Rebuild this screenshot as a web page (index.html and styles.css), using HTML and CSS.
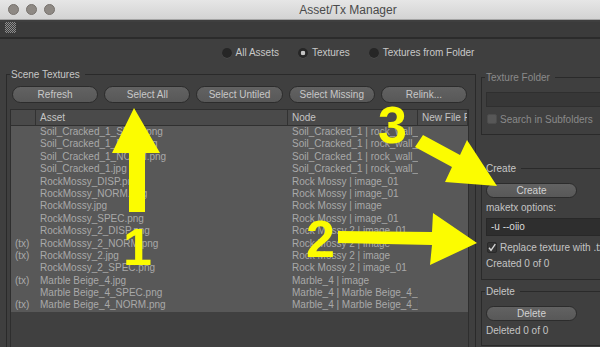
FILE: index.html
```html
<!DOCTYPE html>
<html>
<head>
<meta charset="utf-8">
<link rel="stylesheet" href="styles.css">
</head>
<body>
<div class="window">
  <header class="titlebar">
    <div class="lights"><span class="light"></span><span class="light"></span><span class="light"></span></div>
    <div class="title">Asset/Tx Manager</div>
  </header>
  <div class="toolbar"><span class="grip"></span></div>
  <div class="modes">
    <span class="radio"><span class="dot"></span>All Assets</span>
    <span class="radio on"><span class="dot"></span>Textures</span>
    <span class="radio"><span class="dot"></span>Textures from Folder</span>
  </div>
  <div class="panes">
    <section class="group scene">
      <div class="group-title"><span>Scene Textures</span></div>
      <div class="btnrow">
        <button class="btn">Refresh</button>
        <button class="btn">Select All</button>
        <button class="btn">Select Untiled</button>
        <button class="btn">Select Missing</button>
        <button class="btn">Relink...</button>
      </div>
      <div class="table">
        <div class="thead"><div class="th"></div><div class="th">Asset</div><div class="th">Node</div><div class="th">New File Path</div></div>
        <div class="tbody">
          <div class="tr"><div class="td"></div><div class="td">Soil_Cracked_1_SPEC.png</div><div class="td">Soil_Cracked_1 | rock_wall_1_</div><div class="td"></div></div>
          <div class="tr"><div class="td"></div><div class="td">Soil_Cracked_1_DISP.png</div><div class="td">Soil_Cracked_1 | rock_wall_1_</div><div class="td"></div></div>
          <div class="tr"><div class="td"></div><div class="td">Soil_Cracked_1_NORM.png</div><div class="td">Soil_Cracked_1 | rock_wall_1_</div><div class="td"></div></div>
          <div class="tr"><div class="td"></div><div class="td">Soil_Cracked_1.jpg</div><div class="td">Soil_Cracked_1 | rock_wall_1</div><div class="td"></div></div>
          <div class="tr"><div class="td"></div><div class="td">RockMossy_DISP.png</div><div class="td">Rock Mossy | image_01</div><div class="td"></div></div>
          <div class="tr"><div class="td"></div><div class="td">RockMossy_NORM.png</div><div class="td">Rock Mossy | image_01</div><div class="td"></div></div>
          <div class="tr"><div class="td"></div><div class="td">RockMossy.jpg</div><div class="td">Rock Mossy | image</div><div class="td"></div></div>
          <div class="tr"><div class="td"></div><div class="td">RockMossy_SPEC.png</div><div class="td">Rock Mossy | image_01</div><div class="td"></div></div>
          <div class="tr"><div class="td"></div><div class="td">RockMossy_2_DISP.png</div><div class="td">Rock Mossy 2 | image_01</div><div class="td"></div></div>
          <div class="tr"><div class="td">(tx)</div><div class="td">RockMossy_2_NORM.png</div><div class="td">Rock Mossy 2 | image</div><div class="td"></div></div>
          <div class="tr"><div class="td">(tx)</div><div class="td">RockMossy_2.jpg</div><div class="td">Rock Mossy 2 | image</div><div class="td"></div></div>
          <div class="tr"><div class="td"></div><div class="td">RockMossy_2_SPEC.png</div><div class="td">Rock Mossy 2 | image_01</div><div class="td"></div></div>
          <div class="tr"><div class="td">(tx)</div><div class="td">Marble Beige_4.jpg</div><div class="td">Marble_4 | image</div><div class="td"></div></div>
          <div class="tr"><div class="td"></div><div class="td">Marble Beige_4_SPEC.png</div><div class="td">Marble_4 | Marble Beige_4_SPEC</div><div class="td"></div></div>
          <div class="tr"><div class="td">(tx)</div><div class="td">Marble Beige_4_NORM.png</div><div class="td">Marble_4 | Marble Beige_4_NORM</div><div class="td"></div></div>
        </div>
      </div>
    </section>
    <aside class="side">
      <section class="group folder dim">
        <div class="group-title"><span>Texture Folder</span></div>
        <div class="field"></div>
        <div class="check"><span class="box"></span>Search in Subfolders</div>
      </section>
      <section class="group create">
        <div class="group-title"><span>Create</span></div>
        <button class="btn small">Create</button>
        <div class="line">maketx options:</div>
        <div class="field dark">-u --oiio</div>
        <div class="check on"><span class="box"><svg width="10" height="11" viewBox="0 0 10 11"><path d="M2 5.8 L4 8.3 L8.3 2.2" fill="none" stroke="#d6d6d6" stroke-width="1.4"/></svg></span>Replace texture with .tx</div>
        <div class="line last">Created 0 of 0</div>
      </section>
      <section class="group delete">
        <div class="group-title"><span>Delete</span></div>
        <button class="btn small">Delete</button>
        <div class="line last">Deleted 0 of 0</div>
      </section>
    </aside>
  </div>
  <svg class="annot" width="600" height="347" viewBox="0 0 600 347">
    <polygon points="134,108 160,153 145,153 145,212 129,212 129,153 112,153"/>
    <polygon points="423,135 460,155 467,140 497,186 445,182 452,167 415,147"/>
    <polygon points="338,231 432,232 433,213 477,243 430,265 432,245 338,243"/>
    <text x="378" y="143">3</text>
    <text x="123" y="265">1</text>
    <text x="306" y="257">2</text>
  </svg>
</div>
</body>
</html>
```

FILE: styles.css
```css
* { box-sizing: border-box; }
html, body {
  margin: 0;
  width: 600px;
  height: 347px;
  overflow: hidden;
  background: #3f3f3f;
}
body {
  font-family: "Liberation Sans", Arial, sans-serif;
  font-size: 10px;
  color: #c6c6c6;
}
.window {
  position: relative;
  width: 696px;
  height: 347px;
  background: #3f3f3f;
}
.titlebar {
  height: 20px;
  display: flex;
  align-items: center;
  background: linear-gradient(#e6e6e6, #d3d3d3);
  border-bottom: 1px solid #a4a4a4;
  padding-right: 55px;
}
.lights {
  display: flex;
  gap: 7px;
  width: 55px;
  padding-left: 8px;
}
.light {
  width: 11px;
  height: 11px;
  border-radius: 50%;
  background: #8e8984;
  border: 1px solid #77726d;
}
.title {
  flex: 1;
  text-align: center;
  font-size: 12px;
  color: #4a4a4a;
}
.toolbar {
  height: 17px;
  background: #3b3b3b;
  border-bottom: 2px solid #2b2b2b;
}
.grip {
  display: block;
  width: 11px;
  height: 11px;
  margin: 2px 0 0 5px;
  background: repeating-conic-gradient(#8e8e8e 0 25%, transparent 0 50%) 0 0 / 2px 2px;
}
.modes {
  display: flex;
  justify-content: center;
  gap: 19px;
  height: 12px;
  margin-top: 8px;
  line-height: 12px;
  color: #c8c8c8;
}
.radio {
  display: flex;
  align-items: center;
  gap: 4px;
}
.dot {
  width: 10px;
  height: 10px;
  border-radius: 50%;
  background: #262626;
  box-shadow: 0 0.5px 0 #555;
}
.radio.on .dot {
  background: radial-gradient(circle, #c4c4c4 0 2px, #262626 2.6px);
}
.panes {
  display: flex;
  align-items: flex-start;
  height: 290px;
  margin-top: 9px;
}
.group {
  display: flex;
  flex-direction: column;
  border: 1px solid #2a2a2a;
  border-top: 0;
}
.group-title {
  display: flex;
  align-items: flex-start;
  height: 13px;
  margin: -6px -1px 0;
  line-height: 13px;
  color: #c6c6c6;
}
.group-title::before,
.group-title::after {
  content: "";
  height: 1px;
  margin-top: 6px;
  background: #2a2a2a;
}
.group-title::before { width: 4px; }
.group-title::after { flex: 1; }
.group-title span { padding: 0 5px 0 1px; }
.scene {
  width: 470px;
  height: 284px;
  margin: 6px 0 0 6px;
}
.btnrow {
  display: flex;
  gap: 6px;
  margin: 5px 8px 0 5px;
}
.btn {
  font: inherit;
  color: #c8c8c8;
  height: 17px;
  padding: 0;
  border: 1px solid #2c2c2c;
  border-radius: 9px;
  background: linear-gradient(#626262, #585858);
  line-height: 15px;
  text-align: center;
}
.btnrow .btn { flex: 1; }
.btn.small {
  width: 91px;
  height: 15px;
  line-height: 13px;
  margin: 8px 0 0 4px;
  color: #d2d2d2;
}
.table {
  flex: 1;
  margin: 6px 6px 0 3px;
  border: 1px solid #2e2e2e;
  background: #404040;
  overflow: hidden;
}
.thead, .tr {
  display: grid;
  grid-template-columns: 25px 252px 130px 1fr;
}
.thead {
  height: 16px;
  background: #4a4a4a;
  border-bottom: 1px solid #303030;
  color: #c4c4c4;
}
.th {
  line-height: 15px;
  padding-left: 4px;
  border-right: 1px solid #323232;
  white-space: nowrap;
  overflow: hidden;
}
.tr {
  height: 12.4px;
  line-height: 12.4px;
  background: #585858;
  color: #a9a9a9;
}
.td {
  padding-left: 4px;
  white-space: nowrap;
  overflow: hidden;
}
.side {
  width: 215px;
  margin-left: 5px;
  display: flex;
  flex-direction: column;
}
.folder { margin-top: 9px; }
.dim .group-title, .dim .check { color: #8a8a8a; }
.field {
  height: 15px;
  margin: 8px 4px 0 4px;
  background: #373737;
  border: 1px solid #2f2f2f;
  line-height: 16px;
  padding-left: 4px;
  color: #dadada;
}
.field.dark {
  height: 18px;
  margin-top: 4px;
  background: #2e2e2e;
  border-color: #282828;
}
.check {
  display: flex;
  align-items: center;
  gap: 3px;
  height: 10px;
  margin: 7px 0 10px 5px;
  white-space: nowrap;
  color: #c4c4c4;
}
.box {
  width: 10px;
  height: 10px;
  border-radius: 2px;
  background: #575757;
  border: 1px solid #4c4c4c;
}
.check.on {
  height: 11px;
  margin: 6px 0 0 5px;
}
.check.on .box {
  height: 11px;
  background: #353535;
  border-color: #2a2a2a;
  position: relative;
}
.check.on .box svg {
  position: absolute;
  left: -1px;
  top: -1px;
}
.create { margin-top: 33px; }
.delete { margin-top: 11px; }
.line {
  margin: 4px 0 0 4px;
  line-height: 12px;
  color: #c4c4c4;
}
.line.last { margin-bottom: 9px; }
.create .line.last { margin-top: 5px; }
.delete .line.last { margin-bottom: 8px; }
.annot {
  position: absolute;
  left: 0;
  top: 0;
  pointer-events: none;
  fill: #fcfc00;
}
.annot text {
  font-family: "Liberation Sans", Arial, sans-serif;
  font-weight: bold;
  font-size: 52px;
}
```
